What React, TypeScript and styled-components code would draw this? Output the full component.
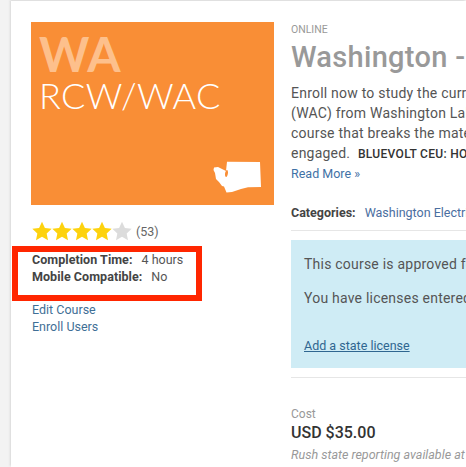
import React from "react";
import styled, { createGlobalStyle } from "styled-components";

const GlobalStyle = createGlobalStyle`
  html, body {
    margin: 0;
    padding: 0;
    width: 466px;
    height: 467px;
    overflow: hidden;
    background: #f3f3f3;
    font-family: Roboto, "Liberation Sans", sans-serif;
  }
`;

const Star: React.FC<{ on: boolean }> = ({ on }) => (
  <StarSvg viewBox="0 0 24 24">
    <path
      fill={on ? "#fdd20e" : "#dcdcdc"}
      d="M12 .8l3.5 7.5 8.1 1-6 5.6 1.6 8.2L12 19l-7.2 4.1 1.6-8.2-6-5.6 8.1-1z"
    />
  </StarSvg>
);

const App: React.FC = () => {
  return (
    <Page>
      <GlobalStyle />
      <Card>
        <LeftColumn>
          <CourseImage>
            <StateCode>WA</StateCode>
            <CodeName>RCW/WAC</CodeName>
            <StateShape viewBox="0 0 48 32">
              <path
                fill="#fff"
                fillRule="evenodd"
                d="M14 .7L47 1l1 25-13 .2-7 1.8-9 3-5.5.5-2.5-6-2-.5-3-4-3-3-1-6-1.5-3 .5-2.5 4-.5 8 4zM13.7 9c-1.2 1-1.7 3-1.7 4.5s.6 3 1.4 2.5 1.6-3 1.6-4.5-.5-3-1.3-2.5z"
              />
            </StateShape>
          </CourseImage>
          <Rating>
            <Star on />
            <Star on />
            <Star on />
            <Star on />
            <Star on={false} />
            <RatingCount>(53)</RatingCount>
          </Rating>
          <Facts>
            <Fact>
              <FactLabel>Completion Time:</FactLabel>
              <span>4 hours</span>
            </Fact>
            <Fact>
              <FactLabel>Mobile Compatible:</FactLabel>
              <span>No</span>
            </Fact>
          </Facts>
          <SideLinks>
            <SideLink>Edit Course</SideLink>
            <SideLink>Enroll Users</SideLink>
          </SideLinks>
        </LeftColumn>
        <RightColumn>
          <Eyebrow>ONLINE</Eyebrow>
          <Title>Washington - RCW/WAC</Title>
          <Description>
            <DescLine>Enroll now to study the current Revised Code of Washington</DescLine>
            <DescLine>(WAC) from Washington Labor and Industries in this online</DescLine>
            <DescLine>course that breaks the material into sections to keep you</DescLine>
            <DescLine>
              engaged. <Ceu>BLUEVOLT CEU: HOURS</Ceu>
            </DescLine>
          </Description>
          <ReadMore>Read More »</ReadMore>
          <Categories>
            <CategoryLabel>Categories:</CategoryLabel>
            <CategoryLink>Washington Electrical</CategoryLink>
          </Categories>
          <Notice>
            <NoticeText>This course is approved for the following licenses</NoticeText>
            <NoticeText>You have licenses entered for this state</NoticeText>
            <AddLicense>Add a state license</AddLicense>
          </Notice>
          <CostBlock>
            <CostLabel>Cost</CostLabel>
            <Price>USD $35.00</Price>
            <RushNote>Rush state reporting available at checkout</RushNote>
          </CostBlock>
        </RightColumn>
        <Highlight />
      </Card>
    </Page>
  );
};

const Page = styled.div`
  width: 466px;
  height: 467px;
  padding: 1px 0 0 11px;
  box-sizing: border-box;
  overflow: hidden;
`;

const Card = styled.div`
  position: relative;
  display: grid;
  grid-template-columns: 243px 175px;
  column-gap: 17px;
  width: 455px;
  height: 466px;
  padding: 21px 0 0 20px;
  box-sizing: border-box;
  background: #fff;
  box-shadow: -1px -1px 2px #d8d8d8;
  overflow: hidden;
`;

const LeftColumn = styled.div`
  display: flex;
  flex-direction: column;
  min-width: 0;
`;

const CourseImage = styled.div`
  position: relative;
  height: 183px;
  padding: 11px 0 0 8px;
  box-sizing: border-box;
  background: #f98e36;
  color: #fff;
  font-family: Lato, sans-serif;
`;

const StateCode = styled.div`
  font-size: 48px;
  line-height: 42px;
  font-weight: 700;
  color: #fdc08c;
`;

const CodeName = styled.div`
  font-size: 36px;
  line-height: 40px;
  font-weight: 300;
  letter-spacing: 0.3px;
`;

const StateShape = styled.svg`
  position: absolute;
  left: 182px;
  top: 139px;
  width: 48px;
  height: 32px;
`;

const Rating = styled.div`
  display: flex;
  align-items: center;
  margin-top: 16px;
  padding-left: 1px;
  height: 20px;
`;

const StarSvg = styled.svg`
  width: 20px;
  height: 20px;
  flex: none;
`;

const RatingCount = styled.span`
  margin-left: 4px;
  font-size: 12.5px;
  color: #666;
`;

const Facts = styled.div`
  margin-top: 10px;
  padding-left: 1px;
  font-size: 12.5px;
  line-height: 17px;
  color: #555;
`;

const Fact = styled.div`
  display: flex;
  gap: 9px;
`;

const FactLabel = styled.span`
  font-weight: 700;
  letter-spacing: 0.05px;
  color: #444;
`;

const SideLinks = styled.div`
  display: flex;
  flex-direction: column;
  margin-top: 16px;
  padding-left: 1px;
`;

const SideLink = styled.a`
  font-size: 12.5px;
  line-height: 17px;
  color: #3f6f96;
`;

const RightColumn = styled.div`
  display: flex;
  flex-direction: column;
  min-width: 0;
  white-space: nowrap;
`;

const Eyebrow = styled.div`
  margin-top: 1px;
  font-size: 10.5px;
  line-height: 14px;
  color: #999;
`;

const Title = styled.h1`
  margin: 2px 0 0;
  font-size: 29px;
  line-height: 36px;
  font-weight: 500;
  letter-spacing: 0.3px;
  color: #999;
`;

const Description = styled.div`
  margin-top: 8px;
  font-size: 14px;
  line-height: 20px;
  letter-spacing: 0.22px;
  color: #555;
`;

const DescLine = styled.div``;

const Ceu = styled.span`
  margin-left: 4px;
  font-size: 12px;
  font-weight: 500;
  letter-spacing: 0.3px;
  color: #333;
`;

const ReadMore = styled.a`
  font-size: 12.5px;
  line-height: 20px;
  color: #3f72a6;
`;

const Categories = styled.div`
  display: flex;
  gap: 9px;
  margin-top: 20px;
  padding-bottom: 8px;
  border-bottom: 1px solid #e6e6e6;
  font-size: 12.5px;
  line-height: 18px;
`;

const CategoryLabel = styled.span`
  font-weight: 700;
  color: #444;
`;

const CategoryLink = styled.a`
  color: #4a6ea0;
`;

const Notice = styled.div`
  display: flex;
  flex-direction: column;
  margin-top: 9px;
  height: 128px;
  padding: 14px 0 0 13px;
  box-sizing: border-box;
  background: #cfecf5;
`;

const NoticeText = styled.div`
  font-size: 14px;
  line-height: 20px;
  letter-spacing: 0.22px;
  margin-bottom: 14px;
  color: #555;
`;

const AddLicense = styled.a`
  margin-top: 14px;
  font-size: 12.5px;
  line-height: 20px;
  color: #2f6690;
  text-decoration: underline;
`;

const CostBlock = styled.div`
  margin-top: 9px;
  padding-top: 28px;
  border-top: 1px solid #e6e6e6;
`;

const CostLabel = styled.div`
  font-size: 12px;
  line-height: 16px;
  color: #999;
`;

const Price = styled.div`
  margin-top: 1px;
  font-size: 16px;
  line-height: 20px;
  font-weight: 500;
  color: #333;
`;

const RushNote = styled.div`
  margin-top: 4px;
  font-size: 12.5px;
  line-height: 16px;
  font-style: italic;
  color: #999;
`;

const Highlight = styled.div`
  position: absolute;
  left: 1px;
  top: 245px;
  width: 190px;
  height: 55px;
  border: 6px solid #ff2600;
  box-sizing: border-box;
`;

export default App;
